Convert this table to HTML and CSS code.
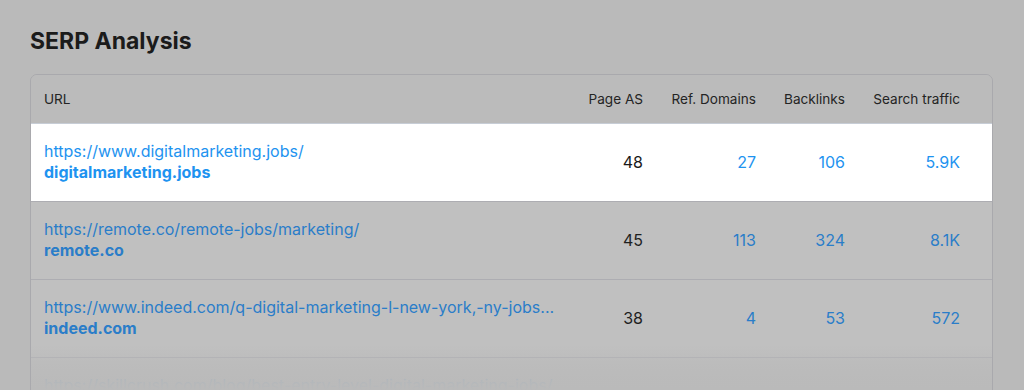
FILE: index.html
```html
<!DOCTYPE html>
<html lang="en">
<head>
<meta charset="utf-8">
<title>SERP Analysis</title>
<link rel="stylesheet" href="styles.css">
</head>
<body>
<main class="page">
  <h2 class="title">SERP Analysis</h2>
  <div class="card">
    <table class="serp">
      <colgroup>
        <col>
        <col class="w-as">
        <col class="w-ref">
        <col class="w-bl">
        <col class="w-st">
      </colgroup>
      <thead>
        <tr>
          <th class="col-url">URL</th>
          <th class="num">Page AS</th>
          <th class="num">Ref. Domains</th>
          <th class="num">Backlinks</th>
          <th class="num last">Search traffic</th>
        </tr>
      </thead>
      <tbody>
        <tr class="active">
          <td class="col-url"><a class="url">https://www.digitalmarketing.jobs/</a><a class="domain">digitalmarketing.jobs</a></td>
          <td class="num plain">48</td>
          <td class="num link">27</td>
          <td class="num link">106</td>
          <td class="num link last">5.9K</td>
        </tr>
        <tr>
          <td class="col-url"><a class="url">https://remote.co/remote-jobs/marketing/</a><a class="domain">remote.co</a></td>
          <td class="num plain">45</td>
          <td class="num link">113</td>
          <td class="num link">324</td>
          <td class="num link last">8.1K</td>
        </tr>
        <tr>
          <td class="col-url"><a class="url">https://www.indeed.com/q-digital-marketing-l-new-york,-ny-jobs...</a><a class="domain">indeed.com</a></td>
          <td class="num plain">38</td>
          <td class="num link">4</td>
          <td class="num link">53</td>
          <td class="num link last">572</td>
        </tr>
        <tr>
          <td class="col-url"><a class="url">https://skillcrush.com/blog/best-entry-level-digital-marketing-jobs/</a><a class="domain">skillcrush.com</a></td>
          <td class="num plain">52</td>
          <td class="num link">61</td>
          <td class="num link">210</td>
          <td class="num link last">1.2K</td>
        </tr>
      </tbody>
    </table>
    <div class="fade"></div>
  </div>
</main>
</body>
</html>
```
FILE: styles.css
```css
html, body {
  margin: 0;
  padding: 0;
}
body {
  background: #bababa;
  font-family: Inter, "Noto Sans", "Liberation Sans", sans-serif;
  color: #1f1f1f;
  height: 390px;
  overflow: hidden;
}
.page {
  padding: 27px 31px 0 30px;
}
.title {
  margin: 0 0 19px 0;
  font-size: 23px;
  line-height: 28px;
  font-weight: 700;
  color: #1b1b1b;
}
.card {
  position: relative;
  border: 1px solid #a9a9ad;
  border-radius: 7px;
  overflow: hidden;
}
.serp {
  width: 100%;
  table-layout: fixed;
  border-collapse: collapse;
  border-spacing: 0;
}
.w-as { width: 86px; }
.w-ref { width: 113px; }
.w-bl { width: 89px; }
.w-st { width: 147px; }
.serp th {
  height: 48px;
  padding: 0;
  font-size: 13.6px;
  font-weight: 400;
  color: #242424;
  text-align: right;
  white-space: nowrap;
  background: #bbbbbb;
  border-bottom: 1px solid #c7cdd6;
}
.serp th.col-url {
  text-align: left;
  padding-left: 13px;
}
.serp td {
  padding: 17px 0 18px 0;
  background: #c0c0c0;
  border-bottom: 1px solid #adadb2;
  font-size: 16px;
  line-height: 21px;
  white-space: nowrap;
  vertical-align: middle;
}
.serp td.col-url {
  padding-left: 13px;
  text-align: left;
  overflow: visible;
}
.serp .num {
  text-align: right;
}
.serp .last {
  padding-right: 32px;
}
.serp tr.active td {
  background: #ffffff;
}
.url, .domain {
  display: block;
  color: #2a7dc9;
  text-decoration: none;
}
.domain {
  font-weight: 700;
}
.plain {
  color: #1f1f1f;
}
.link {
  color: #2a7dc9;
}
.active .url, .active .domain, .active .link {
  color: #1e93f0;
}
.active .plain {
  color: #1a1a1a;
}
.fade {
  position: absolute;
  left: 0;
  right: 0;
  top: 270px;
  height: 46px;
  background: linear-gradient(to bottom, rgba(186,186,186,0) 0%, rgba(186,186,186,0.7) 40%, rgba(186,186,186,0.95) 78%, #bababa 100%);
  pointer-events: none;
}
```
